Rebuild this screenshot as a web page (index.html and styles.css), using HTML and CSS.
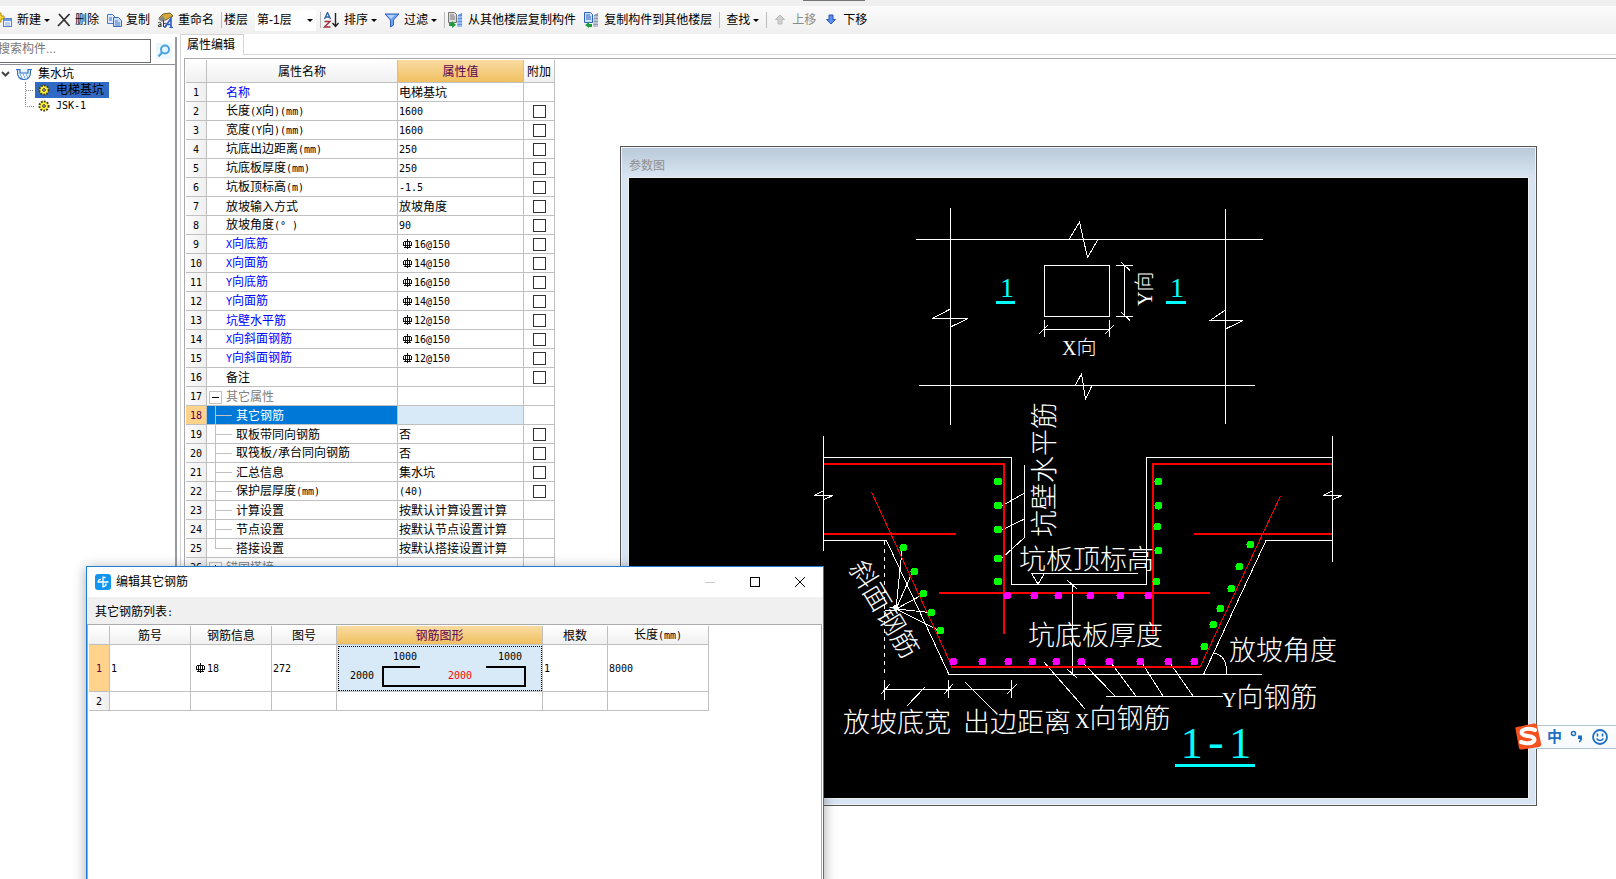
FILE: index.html
```html
<!DOCTYPE html>
<html lang="zh-CN">
<head>
<meta charset="utf-8">
<title>属性编辑</title>
<link rel="stylesheet" href="styles.css">
</head>
<body>
<svg class="defs" aria-hidden="true">
  <symbol id="rebar" viewBox="0 0 10 10"><path d="M5.500 0V10M2 2.500H9M1.500 3V6M9.500 3V6M3.500 2.500V8M7.500 2.500V8M1 6.500H10M2 8.500H9" fill="none" stroke="#111" stroke-width="1" shape-rendering="crispEdges"/></symbol>
  <symbol id="gear" viewBox="0 0 12 12"><circle cx="6" cy="6" r="4.6" fill="#ffef3a" stroke="#4a4200" stroke-width="2" stroke-dasharray="1.8 1.2"/><circle cx="6" cy="6" r="3.200" fill="#ffef3a"/><circle cx="6" cy="6" r="1.300" fill="#fff" stroke="#222"/></symbol>
</svg>

<header class="top">
  <span class="notch"></span>
</header>
<nav class="toolbar" aria-label="工具栏">
  <button class="tool new"><svg width="16" height="16" viewBox="0 0 16 16"><path d="M1 1h3v3h3v3H4v3H1V7h-3V4h3z" fill="#ffe04a" stroke="#b98d00"/><rect x="6.500" y="6.500" width="8" height="8" fill="#eaf3ff" stroke="#5b83c4"/><path d="M7 8h7" stroke="#6f9ee0" stroke-width="2"/><path d="M8 11h5M8 13h5" stroke="#8bb0e4"/></svg>新建<i class="caret"></i></button>
  <button class="tool del"><svg width="14" height="14" viewBox="0 0 14 14"><path d="M2 1L12.500 13M12.500 1L1 13" stroke="#333" stroke-width="1.800"/></svg>删除</button>
  <button class="tool"><svg width="16" height="16" viewBox="0 0 16 16"><path d="M1.500 2.500h5l3 3v6h-8z" fill="#dceafc" stroke="#4b79c0"/><path d="M7.500 5.500h5l3 3v6h-8z" fill="#c9defa" stroke="#3c6ab5"/><path d="M3 6h3M3 8h3M9 9h3M9 11h5M9 13h5" stroke="#4b79c0"/></svg>复制</button>
  <button class="tool"><svg width="17" height="16" viewBox="0 0 17 16"><path d="M2 6l4-4 7-1 3 3-4 2-3 2H5z" fill="#d6a93a" stroke="#77622b"/><path d="M1 7l5-3 2 3-3 3z" fill="#888"/><path d="M1 11q3-2 3 1v3M4 12.500q-3 0-3 1.500t3 0M6.500 8v7M6.500 12q3-2 3 1t-3 1.500" fill="none" stroke="#333"/><path d="M7.500 15.500L14 6.500V15.500M10 12.500H14M12.500 15.500H16" fill="none" stroke="#2d5fc0" stroke-width="1.600"/></svg>重命名</button>
  <i class="sep"></i>
  <label class="floor" for="floor">楼层</label>
  <span class="combo"><select id="floor"><option>第-1层</option></select><i class="caret"></i></span>
  <i class="sep"></i>
  <button class="tool"><svg width="17" height="16" viewBox="0 0 17 16"><path d="M1.500 7L4.500.500L7.500 7M2.500 5H6.500" fill="none" stroke="#2d5fa8" stroke-width="1.300"/><path d="M1.500 9.500H7L1.500 15H7.500" fill="none" stroke="#a03040" stroke-width="1.400"/><path d="M12.500 1V14M9.500 11L12.500 14.500L15.500 11" fill="none" stroke="#222" stroke-width="1.400"/></svg>排序<i class="caret"></i></button>
  <button class="tool"><svg width="16" height="16" viewBox="0 0 16 16"><path d="M1 2h14L9.500 8v5L6.500 15V8z" fill="#6ea3ee" stroke="#2f62b8"/><path d="M3 3h8L7 7z" fill="#b5d3ff"/></svg>过滤<i class="caret"></i></button>
  <i class="sep"></i>
  <button class="tool"><svg width="17" height="16" viewBox="0 0 17 16"><path d="M1.500.500h6l2 2v8h-8z" fill="#ddd" stroke="#777"/><path d="M3 3h4M3 5h5M3 7h5" stroke="#777"/><path d="M11 3l4-2v14h-5z" fill="#5a8fe0"/><path d="M10 5h6M10 8h6M10 11h6M10 14h6" stroke="#d6e6ff"/><path d="M2 11h3V9l4 4-4 3v-2H2z" fill="#1f9c3e"/></svg>从其他楼层复制构件</button>
  <button class="tool"><svg width="17" height="16" viewBox="0 0 17 16"><path d="M1.500.500h6l2 2v8h-8z" fill="#cfe2ff" stroke="#2d62bd"/><path d="M3 3h4M3 5h5M3 7h5" stroke="#2d62bd"/><path d="M11 3l4-2v14h-5z" fill="#8e99a8"/><path d="M10 5h6M10 8h6M10 11h6M10 14h6" stroke="#eef"/><path d="M9 15H6v1L2 13l4-3v2h3z" fill="#1f9c3e"/></svg>复制构件到其他楼层</button>
  <i class="sep"></i>
  <button class="tool find">查找<i class="caret"></i></button>
  <i class="sep"></i>
  <button class="tool wide off" disabled><svg width="10" height="12" viewBox="0 0 10 12"><path d="M5 1L9.500 5.500H7V10H3V5.500H.500z" fill="#d0d0d0" stroke="#bbb"/></svg>上移</button>
  <button class="tool wide"><svg width="10" height="12" viewBox="0 0 10 12"><path d="M5 10L9.500 5.500H7V1H3V5.500H.500z" fill="#5b8ef0" stroke="#2b55b5"/></svg>下移</button>
</nav>

<main class="main">
  <aside class="side">
    <div class="search">
      <input type="text" placeholder="搜索构件..." aria-label="搜索构件">
      <button aria-label="搜索"><svg width="14" height="14" viewBox="0 0 14 14"><circle cx="8" cy="5.500" r="4" fill="#e6f5ff" stroke="#4aa3e0" stroke-width="2"/><path d="M5 8.500L1.500 12.500" stroke="#4aa3e0" stroke-width="2"/></svg></button>
    </div>
    <ul class="tree">
      <li class="node root"><svg width="9" height="8" viewBox="0 0 9 8"><path d="M1 2L4.500 5.500L8 2" fill="none" stroke="#444" stroke-width="2"/></svg><svg width="18" height="16" viewBox="0 0 18 16"><path d="M1 3.500h4v3.500h8V3.500H17M2.500 3.500C2.500 7 2 9 4 11.500C5.500 13 7 13.500 9 13.500S13 13 14 11.500C16 9 15.500 7 15.500 3.500" fill="#e6f3ff" stroke="#2f6fc0" stroke-width="1.200"/><path d="M5 9h1M8 9h1M11 9h1M6 11h1M9 11h1M12 11h1" stroke="#2f6fc0"/></svg><span>集水坑</span></li>
      <li class="node leaf sel"><span class="hit"><svg width="12" height="12"><use href="#gear"/></svg>电梯基坑</span></li>
      <li class="node leaf"><span class="hit"><svg width="12" height="12"><use href="#gear"/></svg><span class="m">JSK-1</span></span></li>
    </ul>
  </aside>

  <section class="work">
    <div class="tabs"><button class="tab">属性编辑</button></div>
    <div class="sheet">
      <table class="grid props">
        <colgroup><col class="c-no"><col class="c-name"><col class="c-val"><col class="c-add"></colgroup>
        <thead><tr><th></th><th>属性名称</th><th class="hot">属性值</th><th>附加</th></tr></thead>
        <tbody>
          <tr><th>1</th><td class="k b">名称</td><td>电梯基坑</td><td></td></tr>
          <tr><th>2</th><td class="k">长度<span class="m">(X</span>向<span class="m">)(mm)</span></td><td class="m">1600</td><td class="c"><input type="checkbox" aria-label="附加 长度"></td></tr>
          <tr><th>3</th><td class="k">宽度<span class="m">(Y</span>向<span class="m">)(mm)</span></td><td class="m">1600</td><td class="c"><input type="checkbox" aria-label="附加 宽度"></td></tr>
          <tr><th>4</th><td class="k">坑底出边距离<span class="m">(mm)</span></td><td class="m">250</td><td class="c"><input type="checkbox" aria-label="附加 坑底出边距离"></td></tr>
          <tr><th>5</th><td class="k">坑底板厚度<span class="m">(mm)</span></td><td class="m">250</td><td class="c"><input type="checkbox" aria-label="附加 坑底板厚度"></td></tr>
          <tr><th>6</th><td class="k">坑板顶标高<span class="m">(m)</span></td><td class="m">-1.5</td><td class="c"><input type="checkbox" aria-label="附加 坑板顶标高"></td></tr>
          <tr><th>7</th><td class="k">放坡输入方式</td><td>放坡角度</td><td class="c"><input type="checkbox" aria-label="附加 放坡输入方式"></td></tr>
          <tr><th>8</th><td class="k">放坡角度<span class="m">(° )</span></td><td class="m">90</td><td class="c"><input type="checkbox" aria-label="附加 放坡角度"></td></tr>
          <tr><th>9</th><td class="k b"><span class="m">X</span>向底筋</td><td class="m"><svg class="rb"><use href="#rebar"/></svg>16@150</td><td class="c"><input type="checkbox" aria-label="附加 X向底筋"></td></tr>
          <tr><th>10</th><td class="k b"><span class="m">X</span>向面筋</td><td class="m"><svg class="rb"><use href="#rebar"/></svg>14@150</td><td class="c"><input type="checkbox" aria-label="附加 X向面筋"></td></tr>
          <tr><th>11</th><td class="k b"><span class="m">Y</span>向底筋</td><td class="m"><svg class="rb"><use href="#rebar"/></svg>16@150</td><td class="c"><input type="checkbox" aria-label="附加 Y向底筋"></td></tr>
          <tr><th>12</th><td class="k b"><span class="m">Y</span>向面筋</td><td class="m"><svg class="rb"><use href="#rebar"/></svg>14@150</td><td class="c"><input type="checkbox" aria-label="附加 Y向面筋"></td></tr>
          <tr><th>13</th><td class="k b">坑壁水平筋</td><td class="m"><svg class="rb"><use href="#rebar"/></svg>12@150</td><td class="c"><input type="checkbox" aria-label="附加 坑壁水平筋"></td></tr>
          <tr><th>14</th><td class="k b"><span class="m">X</span>向斜面钢筋</td><td class="m"><svg class="rb"><use href="#rebar"/></svg>16@150</td><td class="c"><input type="checkbox" aria-label="附加 X向斜面钢筋"></td></tr>
          <tr><th>15</th><td class="k b"><span class="m">Y</span>向斜面钢筋</td><td class="m"><svg class="rb"><use href="#rebar"/></svg>12@150</td><td class="c"><input type="checkbox" aria-label="附加 Y向斜面钢筋"></td></tr>
          <tr><th>16</th><td class="k">备注</td><td></td><td class="c"><input type="checkbox" aria-label="附加 备注"></td></tr>
          <tr><th>17</th><td class="g"><button class="fold" aria-label="折叠"></button>其它属性</td><td></td><td></td></tr>
          <tr class="cur"><th>18</th><td class="s">其它钢筋</td><td></td><td></td></tr>
          <tr><th>19</th><td class="s">取板带同向钢筋</td><td>否</td><td class="c"><input type="checkbox" aria-label="附加 取板带同向钢筋"></td></tr>
          <tr><th>20</th><td class="s">取筏板<span class="m">/</span>承台同向钢筋</td><td>否</td><td class="c"><input type="checkbox" aria-label="附加 取筏板/承台同向钢筋"></td></tr>
          <tr><th>21</th><td class="s">汇总信息</td><td>集水坑</td><td class="c"><input type="checkbox" aria-label="附加 汇总信息"></td></tr>
          <tr><th>22</th><td class="s">保护层厚度<span class="m">(mm)</span></td><td class="m">(40)</td><td class="c"><input type="checkbox" aria-label="附加 保护层厚度"></td></tr>
          <tr><th>23</th><td class="s">计算设置</td><td>按默认计算设置计算</td><td></td></tr>
          <tr><th>24</th><td class="s">节点设置</td><td>按默认节点设置计算</td><td></td></tr>
          <tr><th>25</th><td class="s last">搭接设置</td><td>按默认搭接设置计算</td><td></td></tr>
          <tr><th>26</th><td class="g"><button class="fold plus" aria-label="展开"></button>锚固搭接</td><td></td><td></td></tr>
        </tbody>
      </table>
    </div>
  </section>
</main>

<section class="figure-win" aria-label="参数图">
  <h2>参数图</h2>
  <svg class="cad" viewBox="629 178 899 620">
    <g class="w">
      <path d="M950.500 208V425M1225.500 209V424M916 239.500H1263M919 385.500H1255"/>
      <path d="M1069 239.500L1079.500 222L1087.500 257.500L1098 239.500M1075 385.500L1081.500 374L1085.500 399L1092 385.500"/>
      <path d="M950.500 309L932 318.500H968L950.500 327M1225.500 310L1210 320.500H1243L1225.500 329"/>
      <path d="M1044.500 265.500H1109.500V316.500H1044.500Z"/>
      <path d="M1124.500 265V317M1116 265.500H1133M1116 316.500H1133M1121 262L1130 270.500M1121 312L1130 320.500"/>
      <path d="M1044 329.500H1110M1044.500 320V337M1109.500 320V337M1039 334L1048 325M1105 334L1114 325"/>
      <path d="M823.500 436V551M823 457.500H1011.500V584.500H1146.500V457.500H1332.500M1332.500 436V562"/>
      <path d="M823.500 491L814 495.500H833L823.500 499.500M1332.500 491L1323 495.500H1342L1332.500 499.500"/>
      <path d="M823 540.500H886.500L949 674.500H1262M1203.500 674.500L1266 540.500H1332.500"/>
      <path d="M884.500 541V674" stroke-dasharray="4 4"/>
      <path d="M1024.500 465V537.500M1024.500 493L1000 507M1024.500 519L1002 530M1024.500 537.500L1002 558"/>
      <path d="M1031 573.500H1138M1031.500 573.500L1038 584L1044.500 573.500"/>
      <path d="M1072.500 584V674M1067 580L1077 589M1067 669L1077 678"/>
      <path d="M884 689.500H1012M884.500 680V700M948.500 680V698M1011.500 680V698M881 694L890 684M944 694L953 684M1007 694L1017 684"/>
      <path d="M925 687L907 706M965 682L996 713M1044 662L1085 709"/>
      <path d="M1106 696.500H1223M1083 663L1115 696M1111 663L1136 696M1142 663L1163 696M1170 663L1193 696"/>
      <path d="M1214 653Q1228 656 1226 674"/>
      <path d="M896 609L902 550M896 609L912 573M896 609L922 595M896 609L930 612.500M896 609L938 630M885 610.500H896"/>
      <path d="M894 606L898 610" stroke-width="3"/>
    </g>
    <g class="r">
      <path d="M824 464H1004V634M1332 464H1153V634M824 534H956M1194 534H1332M939 593H1210M951 667H1200"/>
      <path class="thin" d="M871.500 492L952 666.500M1200 667L1280.500 496"/>
    </g>
    <g class="green">
      <circle cx="998" cy="481.500" r="4"/><circle cx="998" cy="505.500" r="4"/><circle cx="998" cy="529.500" r="4"/><circle cx="998" cy="558.500" r="4"/><circle cx="998" cy="581.500" r="4"/>
      <circle cx="903.500" cy="547.500" r="4"/><circle cx="914.500" cy="571.500" r="4"/><circle cx="923.500" cy="593.500" r="4"/><circle cx="931.500" cy="612.500" r="4"/><circle cx="940.500" cy="630.500" r="4"/>
      <circle cx="1158.500" cy="481.500" r="4"/><circle cx="1158.500" cy="505.500" r="4"/><circle cx="1157.500" cy="526.500" r="4"/><circle cx="1158.500" cy="550.500" r="4"/><circle cx="1156.500" cy="581.500" r="4"/>
      <circle cx="1250.500" cy="544.500" r="4"/><circle cx="1239.500" cy="566.500" r="4"/><circle cx="1231.500" cy="588.500" r="4"/><circle cx="1220.500" cy="608.500" r="4"/><circle cx="1213.500" cy="624.500" r="4"/><circle cx="1204.500" cy="646.500" r="4"/>
    </g>
    <g class="pink">
      <circle cx="1007.500" cy="595.500" r="4"/><circle cx="1034.500" cy="595.500" r="4"/><circle cx="1058.500" cy="595.500" r="4"/><circle cx="1090.500" cy="595.500" r="4"/><circle cx="1120.500" cy="595.500" r="4"/><circle cx="1148.500" cy="595.500" r="4"/>
      <circle cx="953.500" cy="661.500" r="4"/><circle cx="982.500" cy="661.500" r="4"/><circle cx="1008.500" cy="661.500" r="4"/><circle cx="1032.500" cy="661.500" r="4"/><circle cx="1056.500" cy="661.500" r="4"/><circle cx="1081.500" cy="661.500" r="4"/><circle cx="1109.500" cy="661.500" r="4"/><circle cx="1140.500" cy="661.500" r="4"/><circle cx="1168.500" cy="661.500" r="4"/><circle cx="1194.500" cy="661.500" r="4"/>
    </g>
    <path class="cy" d="M996 302.500H1015M1166 302.500H1186M1175 765.500H1255"/>
    <g class="t">
      <text class="small" x="1062" y="355">X向</text>
      <text class="small" transform="translate(1152 306) rotate(-90)">Y向</text>
      <text transform="translate(1054 537) rotate(-90)">坑壁水平筋</text>
      <text x="1019" y="569">坑板顶标高</text>
      <text x="1028" y="645">坑底板厚度</text>
      <text x="843" y="732">放坡底宽</text>
      <text x="963" y="732">出边距离</text>
      <text x="1229" y="660">放坡角度</text>
      <text x="1222" y="707"><tspan class="lat">Y</tspan>向钢筋</text>
      <text x="1075" y="728"><tspan class="lat">X</tspan>向钢筋</text>
      <text transform="translate(876 614) rotate(59)" text-anchor="middle">斜面钢筋</text>
      <text class="num" x="1000" y="297">1</text>
      <text class="num" x="1170" y="297">1</text>
      <text class="title" x="1216" y="758" text-anchor="middle">1<tspan class="dash">-</tspan>1</text>
    </g>
  </svg>
</section>

<section class="dialog" role="dialog" aria-label="编辑其它钢筋">
  <header class="dlg-title">
    <svg width="16" height="16" viewBox="0 0 16 16"><rect width="16" height="16" rx="3" fill="#1296f0"/><path d="M8 3V13M3 8H13M8 3.500H10M8 12.500Q11 12.500 11 10M3.500 8Q3 5.500 5.500 5.500" fill="none" stroke="#fff" stroke-width="1.300" stroke-linecap="round"/></svg>
    <h2>编辑其它钢筋</h2>
    <button class="wb" aria-label="最小化" disabled><svg width="10" height="10"><path d="M0 5.500H10" stroke="#ccc"/></svg></button>
    <button class="wb" aria-label="最大化"><svg width="10" height="10"><rect x=".500" y=".500" width="9" height="9" fill="none" stroke="#000"/></svg></button>
    <button class="wb" aria-label="关闭"><svg width="10" height="10"><path d="M0 0L10 10M10 0L0 10" stroke="#000"/></svg></button>
  </header>
  <p class="dlg-label">其它钢筋列表<span class="m">:</span></p>
  <div class="dlg-sheet">
    <table class="grid bars">
      <colgroup><col class="c-no"><col class="d-id"><col class="d-id"><col class="d-fig"><col class="d-shape"><col class="d-fig"><col class="d-len"></colgroup>
      <thead><tr><th></th><th>筋号</th><th>钢筋信息</th><th>图号</th><th class="hot">钢筋图形</th><th>根数</th><th>长度<span class="m">(mm)</span></th></tr></thead>
      <tbody>
        <tr class="big"><th class="on">1</th><td class="m">1</td><td class="m"><svg class="rb"><use href="#rebar"/></svg>18</td><td class="m">272</td>
          <td class="shape"><svg viewBox="0 0 205 46"><path d="M83 22H46V41H188V22H149" fill="none" stroke="#000" stroke-width="2"/><text x="56" y="15">1000</text><text x="161" y="15">1000</text><text x="13" y="34">2000</text><text x="111" y="34" class="redt">2000</text></svg></td>
          <td class="m">1</td><td class="m">8000</td></tr>
        <tr><th>2</th><td></td><td></td><td></td><td></td><td></td><td></td></tr>
      </tbody>
    </table>
  </div>
</section>

<div class="ime" aria-label="输入法">
  <svg width="30" height="30" viewBox="0 0 30 30"><path d="M3 5Q1 5 1.500 7L5 26Q5.500 28 8 27.500L25 25Q28 24 27 21L23 3Q22 1 20 1.500Z" fill="#f4511e"/><path d="M21 8Q12 5 8 9Q6 13 14 14Q22 15 20 19Q16 23 7 20" fill="none" stroke="#fff" stroke-width="4" stroke-linecap="round"/></svg>
  <button class="cn">中</button>
  <button aria-label="标点"><svg width="14" height="16" viewBox="0 0 14 16"><circle cx="3.500" cy="4.500" r="2" fill="none" stroke="#1d6fc4" stroke-width="1.500"/><path d="M8 6.500h4v3q0 3-3 4v-1.500q1-.500 1-2H8z" fill="#1d6fc4"/></svg></button>
  <button aria-label="表情"><svg width="16" height="16" viewBox="0 0 16 16"><circle cx="8" cy="8" r="7" fill="none" stroke="#1d6fc4" stroke-width="1.800"/><path d="M5.500 4.500v3M10.500 4.500v3" stroke="#1d6fc4" stroke-width="1.600"/><path d="M4.500 9.500Q8 13.500 11.500 9.500" fill="none" stroke="#1d6fc4" stroke-width="1.300"/></svg></button>
  <button aria-label="语音"><svg width="8" height="16" viewBox="0 0 8 16"><circle cx="4" cy="8" r="4" fill="#1d6fc4"/></svg></button>
</div>
</body>
</html>
```
FILE: styles.css
```css
* { box-sizing: border-box; }
body {
  margin: 0;
  height: 100vh;
  overflow: hidden;
  display: flex;
  flex-direction: column;
  position: relative;
  background: #fff;
  color: #000;
  font: 12px/16px "Liberation Sans", "Noto Sans CJK SC", sans-serif;
}
button { border: 0; background: none; padding: 0; margin: 0; font: inherit; color: inherit; }
h2, p, ul { margin: 0; padding: 0; font: inherit; list-style: none; }
.defs { position: absolute; width: 0; height: 0; }
.m { font-family: "DejaVu Sans Mono", monospace; font-size: 10px; }

.top { flex: none; height: 6px; background: #f0f0f0; display: flex; padding-left: 803px; }
.notch { width: 62px; height: 1px; background: #777; }
.toolbar {
  flex: none;
  height: 28px;
  display: flex;
  align-items: center;
  margin-left: -3px;
  background: linear-gradient(#fbfbfb, #efefef);
  white-space: nowrap;
}
.tool { display: flex; align-items: center; gap: 4px; margin-right: 7px; height: 22px; }
.tool svg, .node svg, .search svg { display: block; flex: none; overflow: hidden; }
.tool.wide { gap: 7px; margin: 0 4px 0 6px; }
.tool.find { padding-left: 4px; }
.off { color: #8a8a8a; }
.caret { border: 3px solid transparent; border-top-color: #000; border-bottom-width: 0; }
.tool .caret { margin-left: -1px; }
.sep { width: 1px; height: 16px; background: #bbb; margin-right: 2px; }
.floor { margin-right: 7px; }
.combo { display: flex; align-items: center; background: #fff; height: 21px; width: 61px; margin-right: 4px; }
.combo select { appearance: none; border: 0; background: none; padding: 0 0 0 2px; font: inherit; flex: 1; min-width: 0; }
.combo .caret { margin: 0 3px 0 2px; }

.main { flex: 1; min-height: 0; display: flex; }
.side { width: 177px; flex: none; border-right: 2px solid #999ba3; margin-top: 3px; overflow: hidden; }
.search { display: flex; height: 28px; padding-top: 2px; border-bottom: 1px solid #8c8f96; gap: 5px; }
.search input {
  width: 154px; height: 24px; margin-left: -3px; padding: 0 0 4px 0;
  border: 1px solid #6e6e6e; font: inherit; background: #fff;
}
.search input::placeholder { color: #777; opacity: 1; }
.search button { width: 16px; height: 16px; display: grid; place-items: center; background: #eef7fd; margin-top: 4px; }
.tree { padding-top: 1px; }
.node { display: flex; align-items: center; height: 16px; }
.root { gap: 5px; padding-left: 1px; }
.leaf { padding-left: 34px; }
.leaf::before { content: ""; width: 8px; height: 16px; margin-left: -9px; border-left: 1px dotted #888; flex: none; background: repeating-linear-gradient(90deg, #888 0 1px, transparent 1px 2px) 0 8px / 8px 1px no-repeat; }
.leaf:last-child::before { height: 8px; align-self: flex-start; border-bottom: 1px dotted #888; background: none; }
.hit { display: flex; align-items: center; gap: 6px; height: 16px; padding: 0 5px 0 3px; margin-left: 1px; }
.sel .hit { background: #316ac5; }

.work { flex: 1; min-width: 0; margin-left: 3px; border-left: 1px solid #d5d5d5; display: flex; flex-direction: column; }
.tabs { display: flex; height: 21px; flex: none; }
.tabs::after { content: ""; flex: 1; border-bottom: 1px solid #d5d5d5; }
.tab { width: 63px; border: 1px solid #d5d5d5; border-width: 1px 1px 0 0; padding-right: 2px; }
.sheet { flex: 1; min-height: 0; overflow: hidden; margin: 3px 0 0 3px; border: 1px solid #a9a9ae; border-width: 1px 0 0 1px; padding: 1px 0 0 1px; }

.grid { border-collapse: separate; border-spacing: 0; table-layout: fixed; width: 0; }
.grid th, .grid td { height: 19px; padding: 1px 0 0; border: 1px solid #c0c0c0; border-width: 0 1px 1px 0; font-weight: normal; white-space: nowrap; line-height: 16px; overflow: hidden; }
.grid td { padding-left: 1px; vertical-align: middle; }
.grid th { background: linear-gradient(#fff, #f0f0f0); text-align: center; }
.grid tbody th { font-family: "DejaVu Sans Mono", monospace; font-size: 10px; background: linear-gradient(90deg, #fdfdfd, #efefef); }
.props thead th { height: 23px; }
.grid thead .hot { background: linear-gradient(#f9dba2, #f0c060); color: #5a0050; }
.grid .cur th, .grid tbody .on { background: #ffd38c; color: #5a0050; }
.c-no { width: 21px; }
.c-name { width: 191px; }
.c-val { width: 126px; }
.c-add { width: 31px; }
.grid .k { padding-left: 19px; }
.b { color: #00f; }
.grid .c { padding: 0; text-align: center; }
.c input { appearance: none; width: 13px; height: 13px; border: 1px solid #333; display: block; margin: 0 auto; background: #fff; }
.rb { width: 10px; height: 10px; vertical-align: -1px; margin: 0 2px 0 3px; }
.grid .g { padding-left: 2px; color: #808080; }
.fold { width: 13px; height: 13px; margin-right: 4px; vertical-align: -2px; border: 1px solid #c0c0c0; background: linear-gradient(#000, #000) center / 7px 1px no-repeat; }
.fold.plus { background: linear-gradient(#000, #000) center / 7px 1px no-repeat, linear-gradient(#000, #000) center / 1px 7px no-repeat; }
.grid .s { padding-left: 29px; background: linear-gradient(#c0c0c0, #c0c0c0) 8px 0 / 1px 100% no-repeat, linear-gradient(#c0c0c0, #c0c0c0) 8px 9px / 17px 1px no-repeat; }
.grid .last { background-size: 1px 10px, 17px 1px; }
.grid .cur .s { background-color: #0078d7; color: #fff; }
.cur td:nth-child(3) { background: #d8eaf8; }

.figure-win {
  position: absolute; left: 620px; top: 146px; right: 79px;
  border: 1px solid #555; padding: 1px 8px 7px 8px;
  background: linear-gradient(#b9c9d9, #d8e4f1 30px);
  box-shadow: inset 0 0 0 1px #eef3f8;
}
.figure-win h2 { height: 30px; padding-top: 10px; color: #8f8f8f; }
.cad { display: block; width: 100%; background: #000; outline: 1px solid #eee; shape-rendering: crispEdges; }
.w { fill: none; stroke: #fff; }
.r { fill: none; stroke: #f00; stroke-width: 2; }
.thin { stroke-width: 1; }
.green { fill: #0f0; }
.pink { fill: #f0f; }
.cy { stroke: #0ff; stroke-width: 3; }
.t { fill: #fff; font: 300 27px "Liberation Serif", "Noto Sans CJK SC", serif; }
.small { font-size: 20px; }
.lat { font-size: 20px; }
.num { font-size: 28px; fill: #0ff; }
.title { font-size: 44px; fill: #0ff; }
.dash { font-family: "Liberation Mono", monospace; }

.dialog {
  position: absolute; left: 86px; top: 566px; bottom: -10px; width: 738px;
  display: flex; flex-direction: column;
  border: 1px solid #1a7fd4; background: #fff;
  box-shadow: 0 2px 12px rgba(0, 0, 0, .35);
}
.dlg-title { display: flex; align-items: center; height: 30px; flex: none; padding: 0 1px 0 8px; }
.dlg-title h2 { flex: 1; padding-left: 5px; }
.wb { width: 45px; height: 28px; display: grid; place-items: center; }
.dlg-label { height: 27px; flex: none; padding: 7px 0 0 8px; background: #f0f0f0; }
.dlg-sheet { flex: 1; border: 1px solid #a9a9ae; padding: 1px 0 0 1px; margin-right: 1px; }
.d-id { width: 81px; }
.d-fig { width: 65px; }
.d-shape { width: 206px; }
.d-len { width: 101px; }
.grid .big th, .grid .big td { height: 47px; }
.grid .big .shape { padding: 0; background: #d8eaf8; outline: 1px dotted #000; outline-offset: -2px; }
.shape svg { display: block; width: 205px; height: 46px; font: 10px "DejaVu Sans Mono", monospace; }
.redt { fill: #f00; }

.ime { position: absolute; right: 0; top: 722px; display: flex; align-items: center; height: 30px; gap: 8px; width: 102px; overflow: hidden; color: #1d6fc4; background: linear-gradient(#b0c4d4, #b0c4d4) 22px 3px / 80px 1px no-repeat, linear-gradient(#b0c4d4, #b0c4d4) 22px 26px / 80px 1px no-repeat, linear-gradient(#fff, #f6f9fc) 22px 3px / 80px 23px no-repeat; }
.ime svg { display: block; flex: none; }
.ime button { flex: none; }
.ime .cn { font-size: 15px; font-weight: bold; margin-left: -5px; }
```
